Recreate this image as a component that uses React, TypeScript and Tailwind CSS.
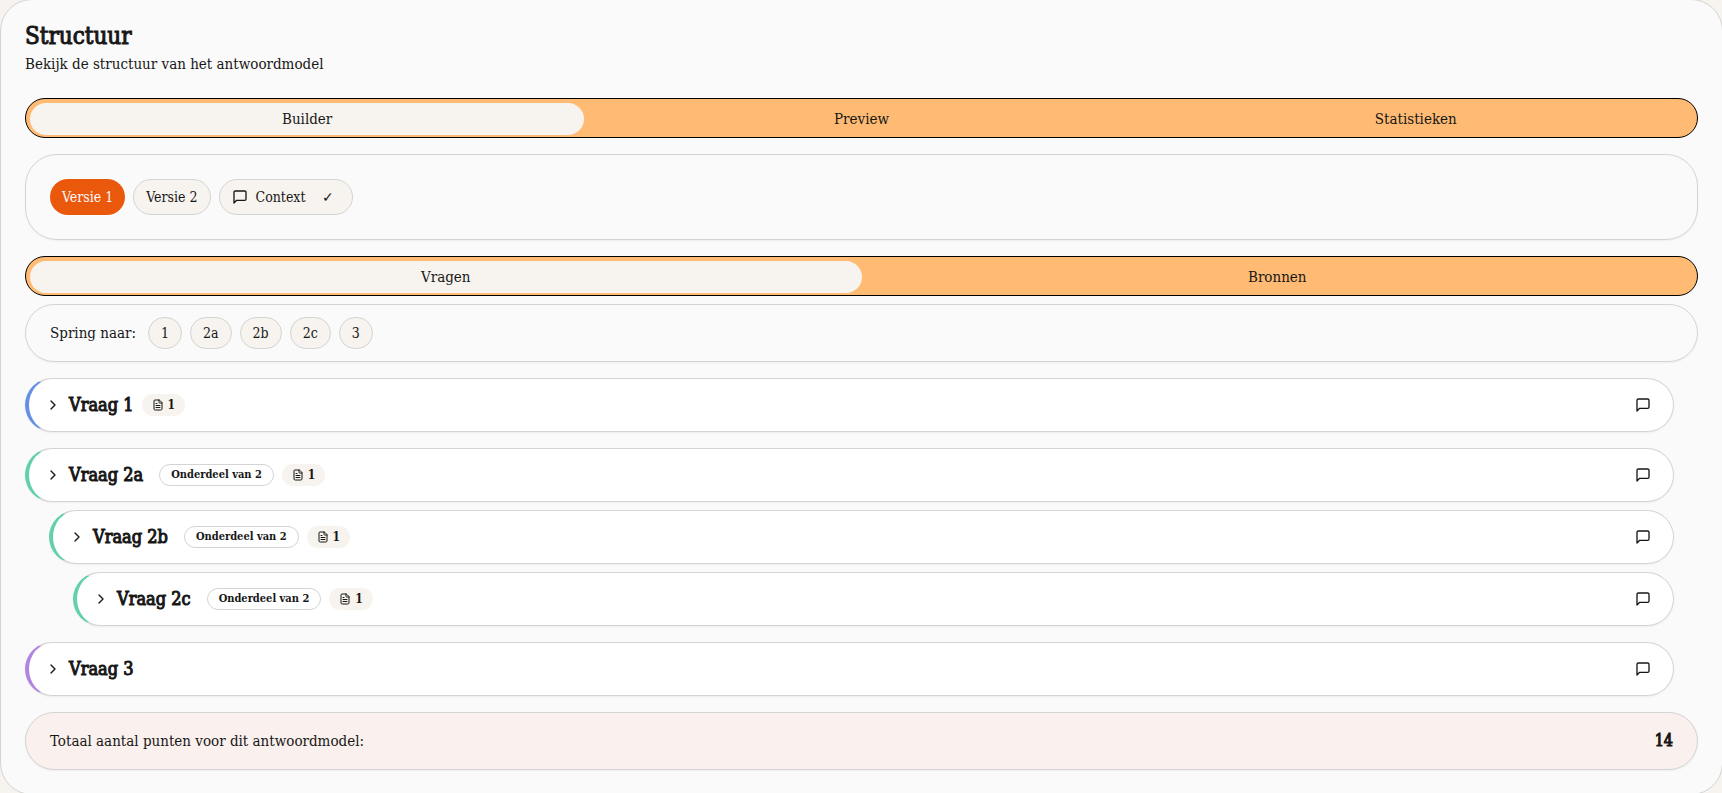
import { useState } from "react";
import { ChevronRight, FileText } from "lucide-react";

function MessageIcon() {
  return (
    <svg
      width="16"
      height="16"
      viewBox="0 0 24 24"
      fill="none"
      stroke="currentColor"
      strokeWidth="2"
      strokeLinecap="round"
      strokeLinejoin="round"
      aria-hidden="true"
    >
      <path d="M21 15a2 2 0 0 1-2 2H7l-4 4V5a2 2 0 0 1 2-2h14a2 2 0 0 1 2 2z" />
    </svg>
  );
}

type TabsProps = { label: string; items: string[]; columns: string };

function Tabs({ label, items, columns }: TabsProps) {
  const [active, setActive] = useState(items[0]);
  return (
    <div
      role="tablist"
      aria-label={label}
      className={`grid h-10 items-start rounded-full border border-black bg-[#ffbb73] p-1 ${columns}`}
    >
      {items.map((item) => (
        <button
          key={item}
          type="button"
          role="tab"
          aria-selected={item === active}
          onClick={() => setActive(item)}
          className={`h-8 rounded-full text-center text-[15px] leading-5 ${item === active ? "bg-[#f7f3ee]" : ""}`}
        >
          {item}
        </button>
      ))}
    </div>
  );
}

type Question = {
  name: string;
  part?: string;
  sources?: number;
  row: string;
};

const questions: Question[] = [
  { name: "1", sources: 1, row: "mt-4 border-l-[#6790e4]" },
  { name: "2a", part: "Onderdeel van 2", sources: 1, row: "mt-4 border-l-[#62d0a9]" },
  { name: "2b", part: "Onderdeel van 2", sources: 1, row: "mt-2 ml-6 border-l-[#62d0a9]" },
  { name: "2c", part: "Onderdeel van 2", sources: 1, row: "mt-2 ml-12 border-l-[#62d0a9]" },
  { name: "3", row: "mt-4 border-l-[#b283e0]" },
];

function QuestionRow({ name, part, sources, row }: Question) {
  return (
    <li
      className={`mr-6 flex h-[54px] items-center rounded-full border border-l-4 border-[#d4d4d4] bg-white pr-[22px] pl-4 shadow-xs ${row}`}
    >
      <button type="button" className="flex items-center gap-2">
        <ChevronRight size={16} />
        <span className="text-lg leading-7 [-webkit-text-stroke:1px]">Vraag {name}</span>
      </button>
      {part && (
        <span className="ml-4 flex h-[22px] items-center rounded-full border border-[#d4d4d4] px-[11px] text-[11px] leading-4 font-bold">
          {part}
        </span>
      )}
      {sources && (
        <span className="ml-2 flex h-[22px] items-center gap-1 rounded-full bg-[#f7f3ee] px-[10px] text-xs leading-4 font-bold">
          <FileText size={12} />
          {sources}
        </span>
      )}
      <button type="button" aria-label={`Opmerking bij vraag ${name}`} className="ml-auto">
        <MessageIcon />
      </button>
    </li>
  );
}

export default function App() {
  return (
    <div className="overflow-hidden bg-[#f7f3ee] font-['DejaVu_Serif_Condensed','DejaVu_Serif',serif] text-[#171717]">
      <main className="-mt-px -mr-px -mb-0.5 rounded-[32px] border border-[#d4d4d4] bg-[#fafafa] px-6 pt-5 pb-6">
        <h1 className="text-2xl leading-8 [-webkit-text-stroke:1px]">Structuur</h1>
        <p className="mt-0.5 mb-6 text-[15px] leading-5">Bekijk de structuur van het antwoordmodel</p>

        <Tabs label="Weergave" items={["Builder", "Preview", "Statistieken"]} columns="grid-cols-3" />

        <section className="my-4 flex gap-2 rounded-[32px] border border-[#d4d4d4] p-6 text-sm leading-5 shadow-xs">
          <button type="button" className="h-9 rounded-full bg-[#ea580c] px-3 text-[#fafafa]">
            Versie 1
          </button>
          <button type="button" className="h-9 rounded-full border border-[#d4d4d4] bg-[#f7f3ee] px-3">
            Versie 2
          </button>
          <button
            type="button"
            className="flex h-9 items-center gap-2 rounded-full border border-[#d4d4d4] bg-[#f7f3ee] pr-[18px] pl-3"
          >
            <MessageIcon />
            Context
            <span className="ml-2">✓</span>
          </button>
        </section>

        <Tabs label="Inhoud" items={["Vragen", "Bronnen"]} columns="grid-cols-2" />

        <nav className="mt-2 flex items-center gap-2 rounded-full border border-[#d4d4d4] px-6 py-3 text-sm leading-5 shadow-xs">
          <span className="mr-1 text-[15px]">Spring naar:</span>
          {questions.map(({ name }) => (
            <button
              key={name}
              type="button"
              className="h-8 rounded-full border border-[#d4d4d4] bg-[#f7f3ee] px-3"
            >
              {name}
            </button>
          ))}
        </nav>

        <ul>
          {questions.map((question) => (
            <QuestionRow key={question.name} {...question} />
          ))}
        </ul>

        <div className="mt-4 flex h-[58px] items-center justify-between rounded-full border border-[#d4d4d4] bg-[#faf0ed] px-6 text-[15px] leading-5 shadow-xs">
          <span>Totaal aantal punten voor dit antwoordmodel:</span>
          <span className="text-base leading-6 [-webkit-text-stroke:1px]">14</span>
        </div>
      </main>
    </div>
  );
}
